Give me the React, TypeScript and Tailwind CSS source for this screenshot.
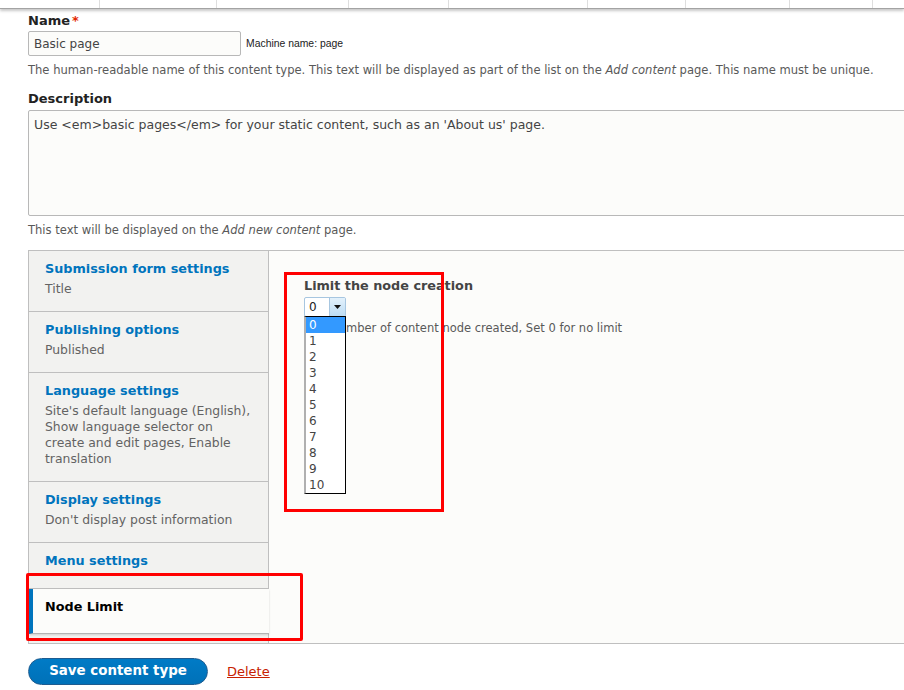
const font = { fontFamily: '"DejaVu Sans", "Liberation Sans", sans-serif' };

const tabs = [
  { title: 'Submission form settings', summary: ['Title'] },
  { title: 'Publishing options', summary: ['Published'] },
  {
    title: 'Language settings',
    summary: ["Site's default language (English),", 'Show language selector on', 'create and edit pages, Enable', 'translation'],
  },
  { title: 'Display settings', summary: ["Don't display post information"] },
  { title: 'Menu settings', summary: [] },
];

const topCells = [100, 117, 132, 100, 139, 98, 104, 83, 60];

export default function App() {
  return (
    <div className="relative h-[690px] w-[904px] overflow-hidden bg-white text-[#333]" style={font}>
      {/* toolbar remnant */}
      <div className="flex h-[9px] border-b border-[#a3a3a3] bg-white shadow-[0_2px_3px_rgba(0,0,0,0.22)]">
        {topCells.map((w, i) => (
          <div key={i} className="h-full shrink-0 border-r border-[#dedede]" style={{ width: w }} />
        ))}
      </div>

      <div className="pl-[28px] pt-[4px]">
        <div className="text-[13px] font-bold leading-[16px] text-[#222]">
          Name<span className="ml-[2px] align-top text-[#e32700]">*</span>
        </div>
        <div className="mt-[2px] flex items-center">
          <div className="flex h-[25px] w-[213px] items-center rounded-[2px] border border-[#b8b8b8] bg-[#fcfcfa] px-[5px] text-[12px] text-[#444]">
            Basic page
          </div>
          <span className="ml-[5px] text-[10.4px] text-[#222]" style={{ fontFamily: '"Liberation Sans", sans-serif' }}>
            Machine name: page
          </span>
        </div>
        <p className="mt-[6px] text-[11.55px] leading-[16px] text-[#595959]">
          The human-readable name of this content type. This text will be displayed as part of the list on the{' '}
          <em>Add content</em> page. This name must be unique.
        </p>

        <div className="mt-[13px] text-[13px] font-bold leading-[16px] text-[#222]">Description</div>
        <div className="mt-[3px] h-[106px] w-[900px] rounded-[2px] border border-[#b8b8b8] bg-[#fcfcfa] px-[5px] pt-[6px] text-[12.5px] leading-[16px] text-[#444]">
          Use &lt;em&gt;basic pages&lt;/em&gt; for your static content, such as an 'About us' page.
        </div>
        <p className="mt-[6px] text-[11.55px] leading-[16px] text-[#595959]">
          This text will be displayed on the <em>Add new content</em> page.
        </p>

        {/* vertical tabs */}
        <div className="mt-[12px] flex w-[900px] border-y border-l border-[#bfbfbf] bg-[#fcfcfa]">
          <ul className="w-[240px] shrink-0 border-r border-[#bfbfbf] bg-[#f2f2f0] pb-[9px]">
            {tabs.map((t) => (
              <li
                key={t.title}
                className={`border-b border-[#bfbfbf] pl-[16px] pr-[8px] pt-[10px] ${t.summary.length ? 'pb-[14px]' : 'pb-[19px]'}`}
              >
                <div className="text-[12.8px] font-bold leading-[16px] text-[#0074bd]">{t.title}</div>
                {t.summary.length > 0 && (
                  <div className="mt-[4px] text-[12.4px] leading-[16px] text-[#636363]">
                    {t.summary.map((s) => (
                      <div key={s}>{s}</div>
                    ))}
                  </div>
                )}
              </li>
            ))}
            <li className="relative -mr-px border-b border-l-[4px] border-b-[#b3b3b3] border-l-[#0074bd] bg-[#fcfcfa] pb-[18px] pl-[12px] pt-[10px] shadow-[0_1px_2px_rgba(0,0,0,0.15)]">
              <div className="text-[12.8px] font-bold leading-[16px] text-black">Node Limit</div>
            </li>
          </ul>

          <div className="relative flex-1 pl-[35px] pt-[27px]">
            <div className="text-[12.8px] font-bold leading-[16px] text-[#444]">Limit the node creation</div>
            <div className="mt-[3px] flex h-[20px] w-[42px] overflow-hidden rounded-[2px] border border-[#a7c6e0] bg-white">
              <span className="flex-1 pl-[4px] text-[12px] leading-[18px] text-[#222]">0</span>
              <span className="flex w-[16px] items-center justify-center border-l border-[#a7c6e0] bg-gradient-to-b from-[#e3f1fb] to-[#bcdcf4]">
                <svg width="7" height="4" viewBox="0 0 7 4">
                  <path d="M0 0h7L3.5 4z" fill="#111" />
                </svg>
              </span>
            </div>
            <p className="mt-[3px] text-[11.5px] leading-[16px] text-[#595959]">
              Max number of content node created, Set 0 for no limit
            </p>

            {/* open select list */}
            <ul className="absolute left-[35px] top-[65px] w-[42px] border border-l-[2px] border-black border-l-[#b0b0b0] bg-white text-[12px] leading-[16px] text-[#444]">
              {Array.from({ length: 11 }, (_, i) => (
                <li key={i} className={`h-[16px] pl-[3px] ${i === 0 ? 'bg-[#3399ff] text-white' : ''}`}>
                  {i}
                </li>
              ))}
            </ul>
          </div>
        </div>

        <div className="mt-[14px] flex items-center gap-[19px]">
          <button
            type="button"
            className="h-[27px] w-[180px] rounded-full border border-[#1e5c90] bg-gradient-to-b from-[#007bc6] to-[#0071b8] text-[13.4px] font-bold text-white"
          >
            Save content type
          </button>
          <a className="text-[13px] text-[#c72100] underline">Delete</a>
        </div>
      </div>

      {/* annotation boxes */}
      <div className="pointer-events-none absolute left-[284px] top-[272px] h-[240px] w-[160px] border-[3px] border-[#ff0000]" />
      <div className="pointer-events-none absolute left-[26px] top-[573px] h-[68px] w-[277px] rounded-[2px] border-[3px] border-[#ff0000]" />
    </div>
  );
}
